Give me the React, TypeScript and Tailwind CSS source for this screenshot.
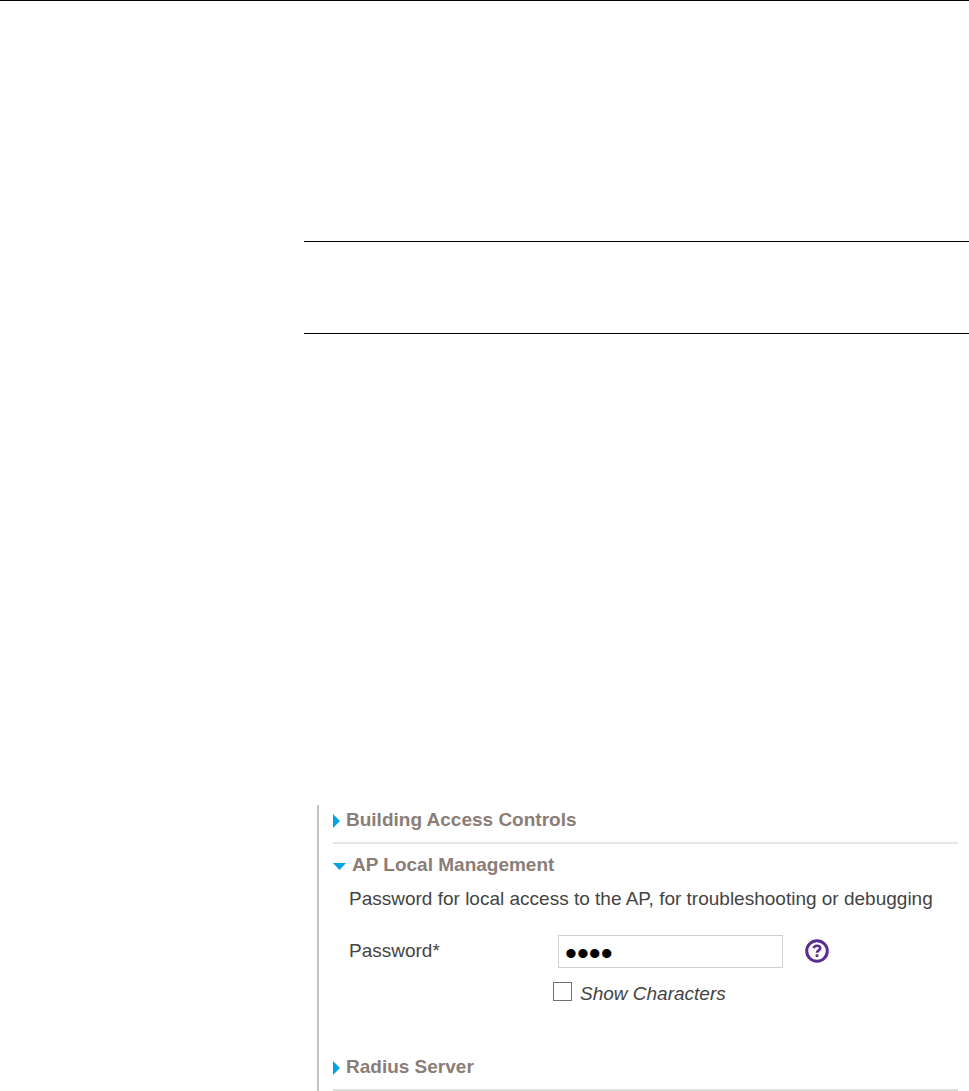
import React, { useState } from 'react';

function SectionHeading({ title, open = false }: { title: string; open?: boolean }) {
  return (
    <h2 className="text-[19px] leading-6 font-bold text-[#8b7d77]">
      <button type="button" aria-expanded={open} className="flex items-center gap-1.5">
        {open ? (
          <svg width="13" height="7" viewBox="0 0 13 7" className="mt-0.5" aria-hidden="true">
            <path d="M0 0h13L6.500 7z" fill="#00a4e4" />
          </svg>
        ) : (
          <svg width="7" height="14" viewBox="0 0 7 14" className="mt-0.5" aria-hidden="true">
            <path d="M0 0l7 7-7 7z" fill="#00a4e4" />
          </svg>
        )}
        {title}
      </button>
    </h2>
  );
}

function HelpIcon() {
  return (
    <svg width="24" height="24" viewBox="0 0 24 24" fill="none" stroke="#5c2d91" aria-hidden="true">
      <circle cx="12" cy="12" r="10.300" strokeWidth="3" />
      <path d="M8.700 9.300c.3-1.700 1.600-2.500 3.300-2.500 1.900 0 3.200.9 3.200 2.500 0 2.200-3.200 2.100-3.200 4.500" strokeWidth="2.600" />
      <path d="M12 15.300v2.700" strokeWidth="2.700" />
    </svg>
  );
}

export default function App() {
  const [password, setPassword] = useState('pass');
  const [visible, setVisible] = useState(false);

  return (
    <div className="bg-white border-t border-black pt-60 font-['Liberation_Sans',Arial,sans-serif] text-[#444444]">
      <div className="ml-[304px] h-[93px] border-y border-black" />

      <main className="mt-[471px] ml-[317px] border-l-2 border-[#c9c3c0] pl-3.5 pr-[11px]">
        <section className="border-b-2 border-[#e7e7e7] pt-[3px] pb-2.5">
          <SectionHeading title="Building Access Controls" />
        </section>

        <section className="pt-[9px] pb-[49px]">
          <SectionHeading title="AP Local Management" open />
          <div className="pl-4 text-[19px] leading-6">
            <p className="mt-2.5">Password for local access to the AP, for troubleshooting or debugging</p>
            <div className="mt-6 flex">
              <label htmlFor="password" className="mt-1 w-[209px]">
                Password*
              </label>
              <input
                id="password"
                type={visible ? 'text' : 'password'}
                value={password}
                onChange={(e) => setPassword(e.target.value)}
                className={`h-[33px] w-[225px] border border-[#d0d0d0] bg-white px-1.5 text-black outline-none ${
                  visible ? 'text-[19px]' : 'pt-1 text-[34px]'
                }`}
              />
              <button type="button" aria-label="Help" className="ml-[22px] mt-1 h-6 w-6">
                <HelpIcon />
              </button>
            </div>
            <label className="mt-3.5 ml-[204px] flex items-start gap-2 italic">
              <input
                type="checkbox"
                checked={visible}
                onChange={(e) => setVisible(e.target.checked)}
                className="h-[19px] w-[19px] appearance-none border border-[#707070] bg-white checked:bg-[#707070]"
              />
              Show Characters
            </label>
          </div>
        </section>

        <section className="border-b-2 border-[#dddddd] pb-2.5">
          <SectionHeading title="Radius Server" />
        </section>
      </main>
    </div>
  );
}
